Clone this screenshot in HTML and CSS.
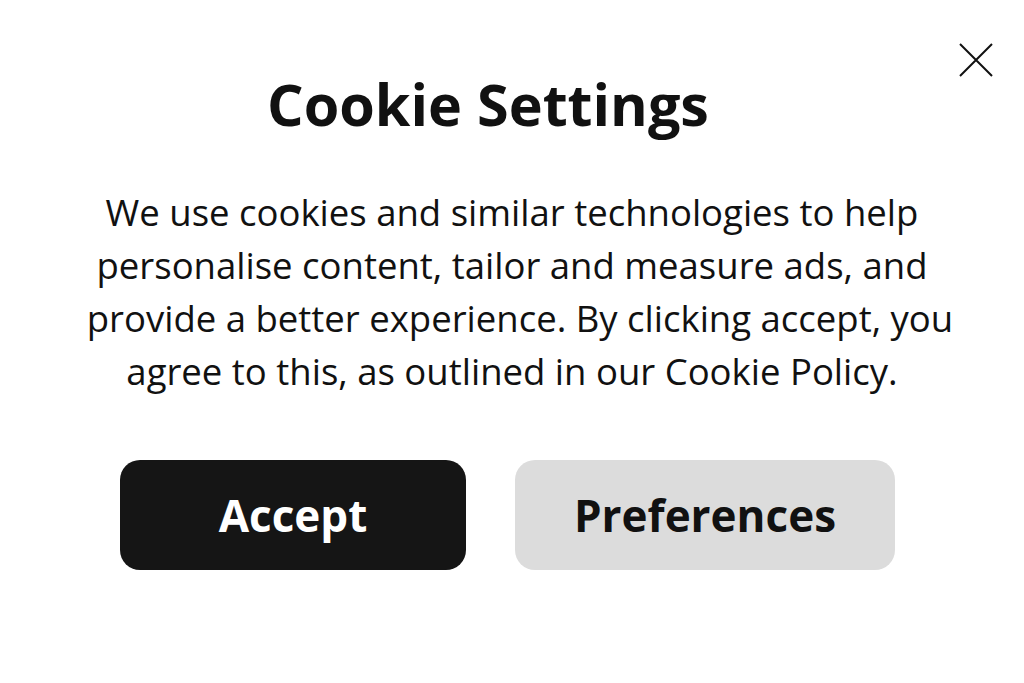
FILE: index.html
```html
<!DOCTYPE html>
<html>
<head>
<meta charset="utf-8">
<link rel="stylesheet" href="styles.css">
</head>
<body>
<div class="dialog">
  <button class="close" aria-label="Close">
    <svg width="36" height="36" viewBox="0 0 36 36"><path d="M2 2 L34 34 M34 2 L2 34" stroke="#111" stroke-width="2" fill="none"/></svg>
  </button>
  <h1 class="title">Cookie Settings</h1>
  <p class="text">We use cookies and similar technologies to help<br>personalise content, tailor and measure ads, and<br><span class="shift">provide a better experience. By clicking accept, you</span><br>agree to this, as outlined in our Cookie Policy.</p>
  <div class="actions">
    <button class="btn btn-accept">Accept</button>
    <button class="btn btn-prefs">Preferences</button>
  </div>
</div>
</body>
</html>
```
FILE: styles.css
```css
html, body {
  margin: 0;
  padding: 0;
  background: #fff;
}
body {
  font-family: "Open Sans", "Noto Sans", sans-serif;
  color: #111;
  width: 1024px;
  height: 683px;
  overflow: hidden;
}
.dialog {
  position: relative;
  display: flex;
  flex-direction: column;
  align-items: center;
  padding-top: 64px;
}
.close {
  position: absolute;
  top: 42px;
  left: 958px;
  width: 36px;
  height: 36px;
  padding: 0;
  border: 0;
  background: none;
  display: block;
}
.close svg { display: block; }
.title {
  margin: 0 48px 0 0;
  font-size: 57.5px;
  font-weight: 700;
  line-height: 80px;
  letter-spacing: 0;
}
.text {
  margin: 42px 0 0 0;
  font-size: 36.5px;
  line-height: 53px;
  text-align: center;
  font-weight: 400;
}
.shift {
  padding-left: 16px;
}
.actions {
  display: flex;
  gap: 49px;
  margin-top: 62px;
  margin-right: 9px;
}
.btn {
  height: 110px;
  border: 0;
  border-radius: 20px;
  font-family: "Open Sans", "Noto Sans", sans-serif;
  font-weight: 700;
  font-size: 44px;
  padding: 0;
}
.btn-accept {
  width: 346px;
  background: #151515;
  color: #fff;
}
.btn-prefs {
  width: 380px;
  background: #dcdcdc;
  color: #111;
}
```
